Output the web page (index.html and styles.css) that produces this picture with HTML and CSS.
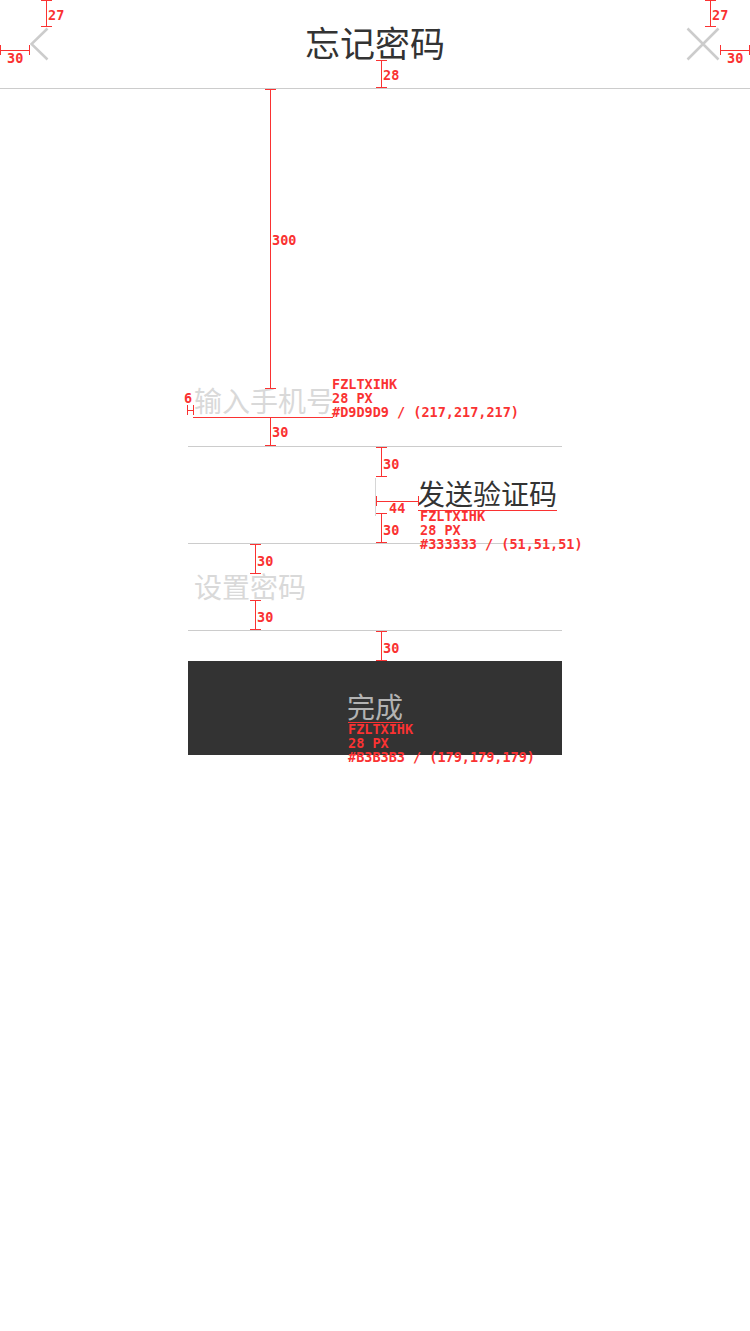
FILE: index.html
```html
<!DOCTYPE html>
<html lang="zh-CN">
<head>
    <meta charset="UTF-8">
    <meta name="viewport" content="width=device-width, initial-scale=1.0">
    <title>忘记密码</title>
    <link rel="stylesheet" href="styles.css">
</head>
<body>

    <div class="page">
        <header class="topbar">
            <a class="nav-btn back" href="#">
                <svg width="19" height="34" viewBox="0 0 19 34"><path d="M17.5 1.5 L1.5 17 L17.5 32.5" fill="none" stroke="#cccccc" stroke-width="2.5"/></svg>
            </a>
            <h1 class="title">忘记密码</h1>
            <a class="nav-btn close" href="#">
                <svg width="34" height="34" viewBox="0 0 34 34"><path d="M1.5 1.5 L32.5 32.5 M32.5 1.5 L1.5 32.5" fill="none" stroke="#cccccc" stroke-width="2.5"/></svg>
            </a>
        </header>

        <form class="reset-form" onsubmit="event.preventDefault();">
            <div class="field phone"><span class="placeholder">输入手机号</span></div>
            <div class="field code">
                <span class="divider"></span>
                <span class="send-code">发送验证码</span>
            </div>
            <div class="field password"><span class="placeholder">设置密码</span></div>
            <button type="submit" class="submit">完成</button>
        </form>

        <!-- design annotations -->
        <div class="marks">
            <span class="dim v v-27l"></span>
            <span class="dim v v-27r"></span>
            <span class="dim v v-28"></span>
            <span class="dim v v-300"></span>
            <span class="dim v v-30a"></span>
            <span class="dim v v-30b"></span>
            <span class="dim v v-30c"></span>
            <span class="dim v v-30d"></span>
            <span class="dim v v-30e"></span>
            <span class="dim v v-30f"></span>

            <span class="dim h h-30l"></span>
            <span class="dim h h-30r"></span>
            <span class="dim h h-6"></span>
            <span class="dim h h-44"></span>

            <span class="uline u-phone"></span>
            <span class="uline u-code"></span>
            <span class="uline u-done"></span>

            <span class="note n-27l">27</span>
            <span class="note n-30l">30</span>
            <span class="note n-27r">27</span>
            <span class="note n-30r">30</span>
            <span class="note n-28">28</span>
            <span class="note n-300">300</span>
            <span class="note n-6">6</span>
            <span class="note n-phone">FZLTXIHK<br>28 PX<br>#D9D9D9 / (217,217,217)</span>
            <span class="note n-30a">30</span>
            <span class="note n-30b">30</span>
            <span class="note n-44">44</span>
            <span class="note n-code">FZLTXIHK<br>28 PX<br>#333333 / (51,51,51)</span>
            <span class="note n-30c">30</span>
            <span class="note n-30d">30</span>
            <span class="note n-30e">30</span>
            <span class="note n-30f">30</span>
            <span class="note n-done">FZLTXIHK<br>28 PX<br>#B3B3B3 / (179,179,179)</span>
        </div>
    </div>

</body>
</html>
```

FILE: styles.css
```css
body {
    font-family: "Noto Sans CJK SC", "Noto Sans", sans-serif;
    margin: 0;
    padding: 0;
    background-color: #fff;
}

.page {
    position: relative;
    width: 750px;
    min-height: 1331px;
}

/* top bar */
.topbar {
    display: grid;
    grid-template-columns: 1fr auto 1fr;
    align-items: center;
    height: 88px;
    padding: 0 30px;
    border-bottom: 1px solid #cccccc;
}

.nav-btn {
    display: flex;
}

.nav-btn.back {
    justify-self: start;
}

.nav-btn.close {
    justify-self: end;
}

.title {
    margin: 0 0 5px;
    font-size: 35px;
    font-weight: 400;
    line-height: 35px;
    color: #333;
}

/* form */
.reset-form {
    width: 374px;
    margin: 0 auto;
}

.field {
    font-size: 28px;
    line-height: 28px;
    border-bottom: 1px solid #cccccc;
}

.placeholder {
    color: #d9d9d9;
}

.field.phone {
    padding: 297px 6px 32px;
}

.field.code {
    display: flex;
    justify-content: flex-end;
    align-items: center;
    height: 96px;
    padding-right: 5px;
}

.field.code .divider {
    width: 1px;
    height: 38px;
    margin-right: 41px;
    margin-top: 4px;
    background-color: #d6d6d6;
}

.send-code {
    color: #333;
    margin-bottom: 4px;
}

.field.password {
    display: flex;
    align-items: center;
    height: 86px;
    padding-left: 6px;
}

.field.password .placeholder {
    margin-bottom: 2px;
}

.submit {
    display: block;
    width: 100%;
    height: 94px;
    margin-top: 30px;
    padding: 0 0 4px;
    border: none;
    background-color: #333;
    color: #b3b3b3;
    font-family: inherit;
    font-size: 28px;
    line-height: 28px;
    cursor: pointer;
}

/* annotation overlay */
.marks {
    position: absolute;
    top: 0;
    left: 0;
    width: 100%;
    height: 100%;
    pointer-events: none;
}

.dim, .uline, .note {
    position: absolute;
}

.dim, .uline, .dim::before, .dim::after {
    background-color: #fa3232;
}

.dim::before, .dim::after {
    content: "";
    position: absolute;
}

.dim.v {
    width: 1px;
}

.dim.v::before, .dim.v::after {
    left: -5px;
    width: 11px;
    height: 1px;
}

.dim.v::before { top: 0; }
.dim.v::after { bottom: 0; }

.dim.h {
    height: 1px;
}

.dim.h::before, .dim.h::after {
    top: -5px;
    width: 1px;
    height: 10px;
}

.dim.h::before { left: 0; }
.dim.h::after { right: 0; }

.v-27l { left: 46px; top: 0; height: 27px; }
.v-27r { left: 710px; top: 0; height: 27px; }
.v-28 { left: 381px; top: 60px; height: 28px; }
.v-300 { left: 270px; top: 89px; height: 300px; }
.v-30a { left: 270px; top: 417px; height: 29px; }
.v-30b { left: 381px; top: 447px; height: 30px; }
.v-30c { left: 381px; top: 513px; height: 30px; }
.v-30d { left: 255px; top: 544px; height: 30px; }
.v-30e { left: 255px; top: 600px; height: 30px; }
.v-30f { left: 381px; top: 631px; height: 30px; }

.h-30l { top: 50px; left: 0; width: 30px; }
.h-30r { top: 50px; left: 720px; width: 30px; }
.h-6 { top: 410px; left: 187px; width: 7px; }
.h-44 { top: 501px; left: 376px; width: 43px; }

.uline {
    height: 1px;
}

.u-phone { top: 417px; left: 193px; width: 140px; }
.u-code { top: 510px; left: 418px; width: 139px; }
.u-done { top: 722px; left: 348px; width: 55px; }

.note {
    font-family: "DejaVu Sans Mono", "Liberation Mono", monospace;
    font-weight: bold;
    font-size: 13.5px;
    line-height: 14px;
    color: #fa3232;
    white-space: nowrap;
}

.n-27l { left: 48px; top: 8px; }
.n-30l { left: 7px; top: 51px; }
.n-27r { left: 712px; top: 8px; }
.n-30r { left: 727px; top: 51px; }
.n-28 { left: 383px; top: 68px; }
.n-300 { left: 272px; top: 233px; }
.n-6 { left: 184px; top: 391px; }
.n-phone { left: 332px; top: 377px; }
.n-30a { left: 272px; top: 425px; }
.n-30b { left: 383px; top: 457px; }
.n-44 { left: 389px; top: 501px; }
.n-code { left: 420px; top: 509px; }
.n-30c { left: 383px; top: 523px; }
.n-30d { left: 257px; top: 554px; }
.n-30e { left: 257px; top: 610px; }
.n-30f { left: 383px; top: 641px; }
.n-done { left: 348px; top: 722px; }
```
